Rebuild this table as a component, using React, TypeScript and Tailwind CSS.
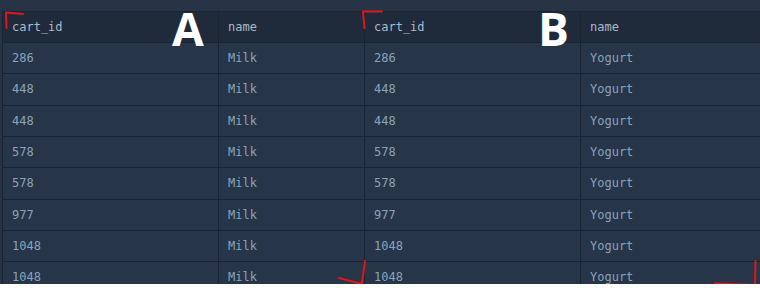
import React from 'react';

const rows: [string, string][] = [
  ['286', 'Milk'],
  ['448', 'Milk'],
  ['448', 'Milk'],
  ['578', 'Milk'],
  ['578', 'Milk'],
  ['977', 'Milk'],
  ['1048', 'Milk'],
  ['1048', 'Milk'],
];

const headCell =
  'h-[31px] flex items-center px-[9px] border-r border-b border-[#1a2331] bg-[#1f2a3a] text-[#a9bbcd]';
const bodyCell =
  'h-[31.33px] flex items-center px-[9px] border-r border-b border-[#1a2331] bg-[#263547] text-[#8aa3bc]';

const App: React.FC = () => {
  return (
    <div className="relative h-[284px] w-[760px] overflow-hidden bg-[#263446] pt-[11px] pl-[2px]">
      <div
        className="grid grid-cols-[216px_146px_216px_200px] border-l border-t border-[#1a2331] text-[12px]"
        style={{ fontFamily: '"DejaVu Sans Mono", monospace' }}
      >
        <div className={headCell}>cart_id</div>
        <div className={headCell}>name</div>
        <div className={headCell}>cart_id</div>
        <div className={headCell}>name</div>
        {rows.map(([id, name], i) => (
          <React.Fragment key={i}>
            <div className={bodyCell}>{id}</div>
            <div className={bodyCell}>{name}</div>
            <div className={bodyCell}>{id}</div>
            <div className={bodyCell}>Yogurt</div>
          </React.Fragment>
        ))}
      </div>

      {/* big labels */}
      <div
        className="absolute left-[172px] top-[3px] text-[46px] font-bold leading-[1.1] text-white"
        style={{ fontFamily: '"Open Sans", sans-serif' }}
      >
        A
      </div>
      <div
        className="absolute left-[538px] top-[3px] text-[46px] font-bold leading-[1.1] text-white"
        style={{ fontFamily: '"Open Sans", sans-serif' }}
      >
        B
      </div>

      {/* red hand-drawn marks */}
      <svg className="pointer-events-none absolute inset-0" width="760" height="288">
        <g fill="none" stroke="#e3141b" strokeWidth="2" strokeLinecap="round" strokeLinejoin="round">
          <path d="M6.5 28 L6 12.5 L23 14" />
          <path d="M364.5 28 L363 11.5 L382 11.5" />
          <path d="M365 261 L362 284 L339 278" />
          <path d="M755.5 261 L755 285 L715 283.5" />
        </g>
      </svg>
    </div>
  );
};

export default App;
